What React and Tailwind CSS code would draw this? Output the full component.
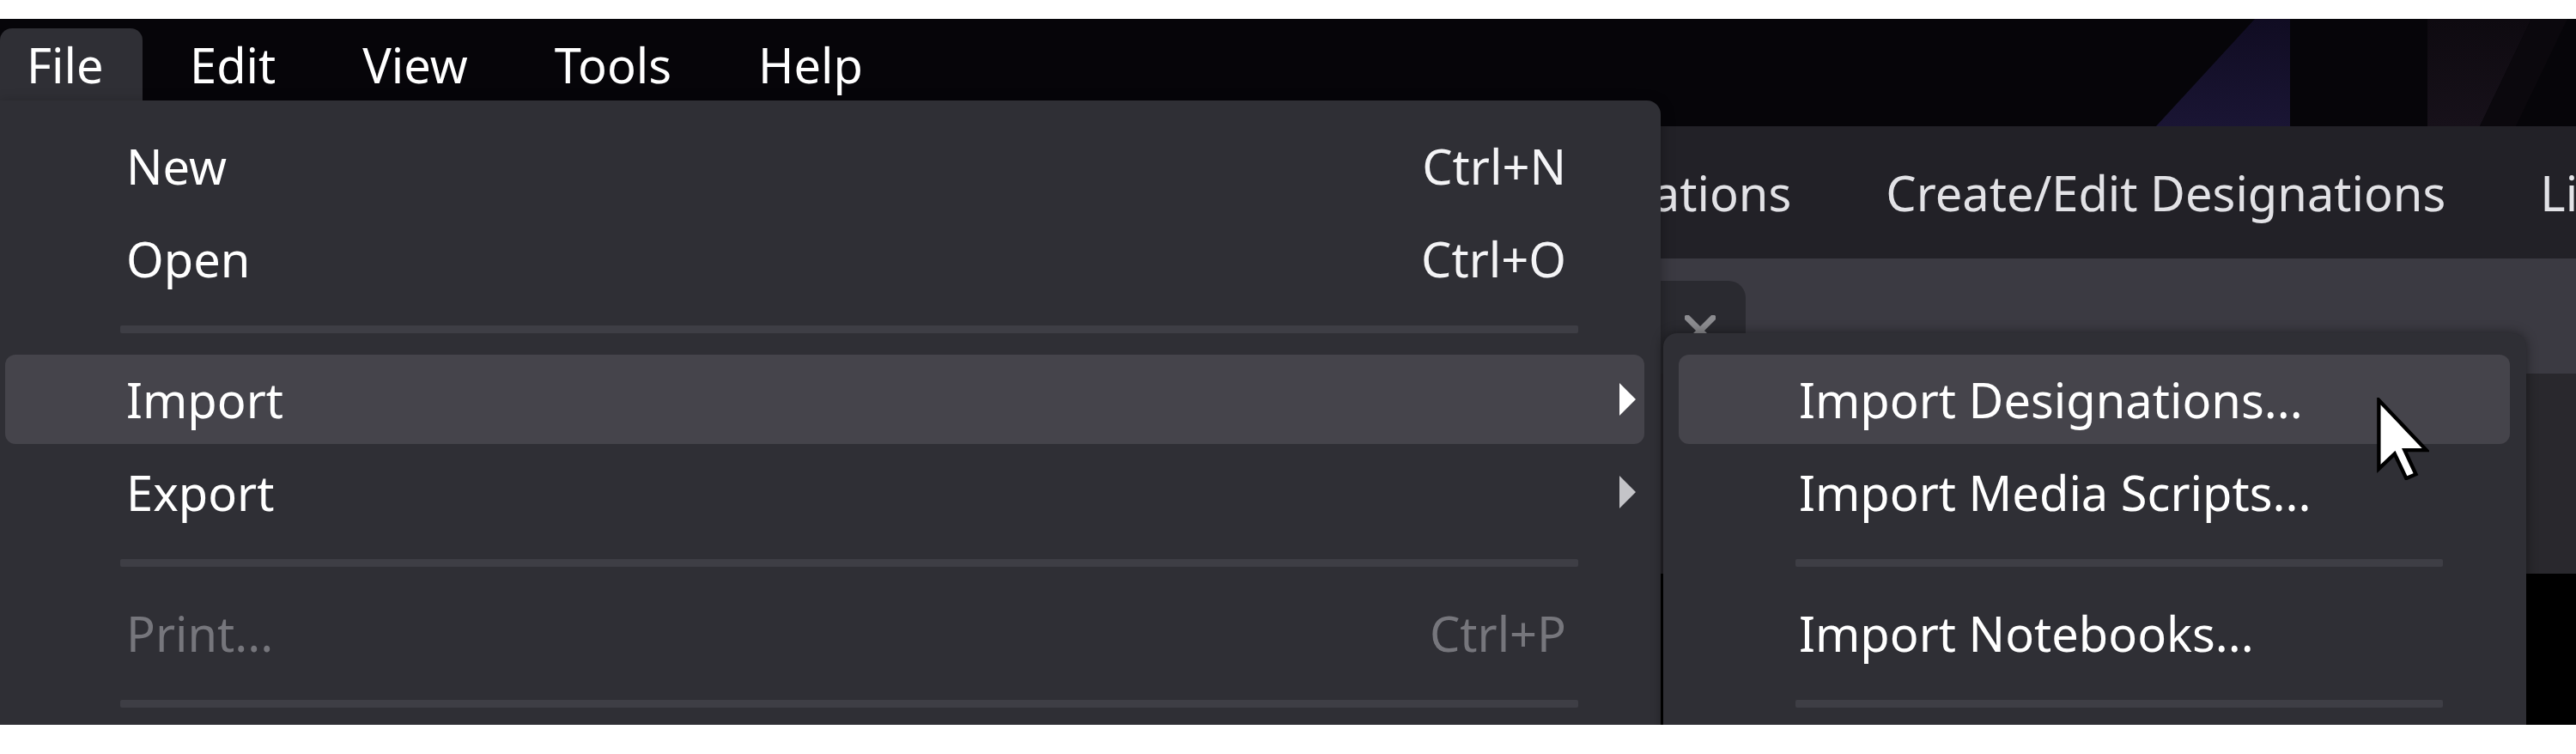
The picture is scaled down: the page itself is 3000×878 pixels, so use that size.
const Arrow = ({ color }) => (
  <svg width="19" height="38" viewBox="0 0 19 38" className="shrink-0">
    <polygon points="0,0 19,19 0,38" fill={color} />
  </svg>
);

function Item({ label, shortcut, sub, active, disabled, padLeft }) {
  return (
    <div className="py-[2px]">
      <div
        className={
          "flex h-[104px] items-center rounded-[12px] " +
          (active ? "bg-[#45444b] " : "") +
          (sub ? "pr-[10px] " : "pr-[91px] ")
        }
        style={{ paddingLeft: padLeft }}
      >
        <span className={"flex-1 leading-none " + (disabled ? "text-[#76767c]" : "text-white")}>{label}</span>
        {shortcut && (
          <span className={"leading-none " + (disabled ? "text-[#76767c]" : "text-[#f4f4f6]")}>{shortcut}</span>
        )}
        {sub && <Arrow color={active ? "#ffffff" : "#c4c4c8"} />}
      </div>
    </div>
  );
}

function Sep({ left, right }) {
  return (
    <div className="flex h-[56px] items-center" style={{ paddingLeft: left, paddingRight: right }}>
      <div className="h-[9px] w-full rounded-[2px] bg-[#3e3e45]" />
    </div>
  );
}

export default function App() {
  return (
    <div className="h-[878px] w-[3000px] overflow-hidden bg-white pt-[22px] font-['Noto_Sans',sans-serif] text-[56px]">
      <div className="relative flex h-[822px] w-full flex-col overflow-hidden bg-black">
        {/* menu bar */}
        <div className="relative h-[125px] shrink-0 bg-[#060509]">
          <svg className="absolute inset-0" width="3000" height="125" viewBox="0 0 3000 125">
            <defs>
              <linearGradient id="pg" x1="0" y1="1" x2="0" y2="0">
                <stop offset="0" stopColor="#1a1534" />
                <stop offset="1" stopColor="#100c22" />
              </linearGradient>
              <linearGradient id="rg" x1="0" y1="1" x2="0" y2="0">
                <stop offset="0" stopColor="#17111a" />
                <stop offset="1" stopColor="#0e0a10" />
              </linearGradient>
            </defs>
            <polygon points="2511,125 2626,0 2667,0 2667,125" fill="url(#pg)" />
            <polygon points="2827,0 2948,0 2888,125 2827,125" fill="url(#rg)" />
            <polygon points="2948,0 2990,0 2930,125 2888,125" fill="#0b080d" />
          </svg>
          <div className="relative flex pt-[11px] text-white">
            <div className="flex h-[84px] w-[166px] items-center rounded-t-[14px] bg-[#2f2f35] pl-[31px]">
              <span className="leading-none">File</span>
            </div>
            <div className="ml-[55px] flex h-[84px] items-center gap-[101px]">
              <span className="leading-none">Edit</span>
              <span className="leading-none">View</span>
              <span className="leading-none">Tools</span>
              <span className="leading-none">Help</span>
            </div>
          </div>
        </div>

        {/* tab bar */}
        <div className="flex h-[154px] shrink-0 items-center bg-[#222127] pl-[1605px] text-[#e2e2e6]">
          <div className="flex items-center gap-[110px] whitespace-nowrap">
            <span className="leading-none">View Designations</span>
            <span className="leading-none">Create/Edit Designations</span>
            <span className="leading-none">Lists</span>
          </div>
        </div>

        {/* tab strip */}
        <div className="flex h-[134px] shrink-0 bg-[#3b3a42] pt-[26px]">
          <div className="ml-[1500px] flex h-full w-[533px] justify-end rounded-t-[20px] bg-[#2a2a30] pr-[35px] pt-[40px]">
            <svg width="36" height="36" viewBox="0 0 36 36">
              <path d="M3 3 L33 33 M33 3 L3 33" stroke="#8c8c90" strokeWidth="7" strokeLinecap="round" />
            </svg>
          </div>
        </div>

        {/* content */}
        <div className="flex flex-1 flex-col">
          <div className="h-[233px] bg-[#29282d]" />
          <div className="flex-1 bg-black" />
        </div>

        {/* File dropdown */}
        <div className="absolute left-0 top-[95px] h-[800px] w-[1934px] rounded-tr-[16px] bg-[#2f2f35] pl-[6px] pr-[19px] pt-[22px] shadow-[0_4px_16px_rgba(0,0,0,0.35)]">
          <Item label="New" shortcut="Ctrl+N" padLeft={141} />
          <Item label="Open" shortcut="Ctrl+O" padLeft={141} />
          <Sep left={134} right={77} />
          <Item label="Import" sub active padLeft={141} />
          <Item label="Export" sub padLeft={141} />
          <Sep left={134} right={77} />
          <Item label="Print..." shortcut="Ctrl+P" disabled padLeft={141} />
          <Sep left={134} right={77} />
        </div>

        {/* Import submenu */}
        <div className="absolute left-[1937px] top-[366px] h-[600px] w-[1005px] rounded-t-[16px] bg-[#2f2f35] pl-[18px] pr-[19px] pt-[23px] shadow-[0_0_14px_rgba(0,0,0,0.45)]">
          <Item label="Import Designations..." active padLeft={140} />
          <Item label="Import Media Scripts..." padLeft={140} />
          <Sep left={136} right={78} />
          <Item label="Import Notebooks..." padLeft={140} />
          <Sep left={136} right={78} />
        </div>

        {/* cursor */}
        <svg className="absolute left-[2767px] top-[441px]" width="62" height="96" viewBox="-0.6 -0.6 12.6 19.8">
          <path d="M0 0 L0 16.5 L3.8 12.9 L6.6 18.8 L8.9 17.8 L6.2 12 L11.4 12 Z" fill="#ffffff" stroke="#000000" strokeWidth="0.9" strokeLinejoin="miter" />
        </svg>
      </div>
    </div>
  );
}
